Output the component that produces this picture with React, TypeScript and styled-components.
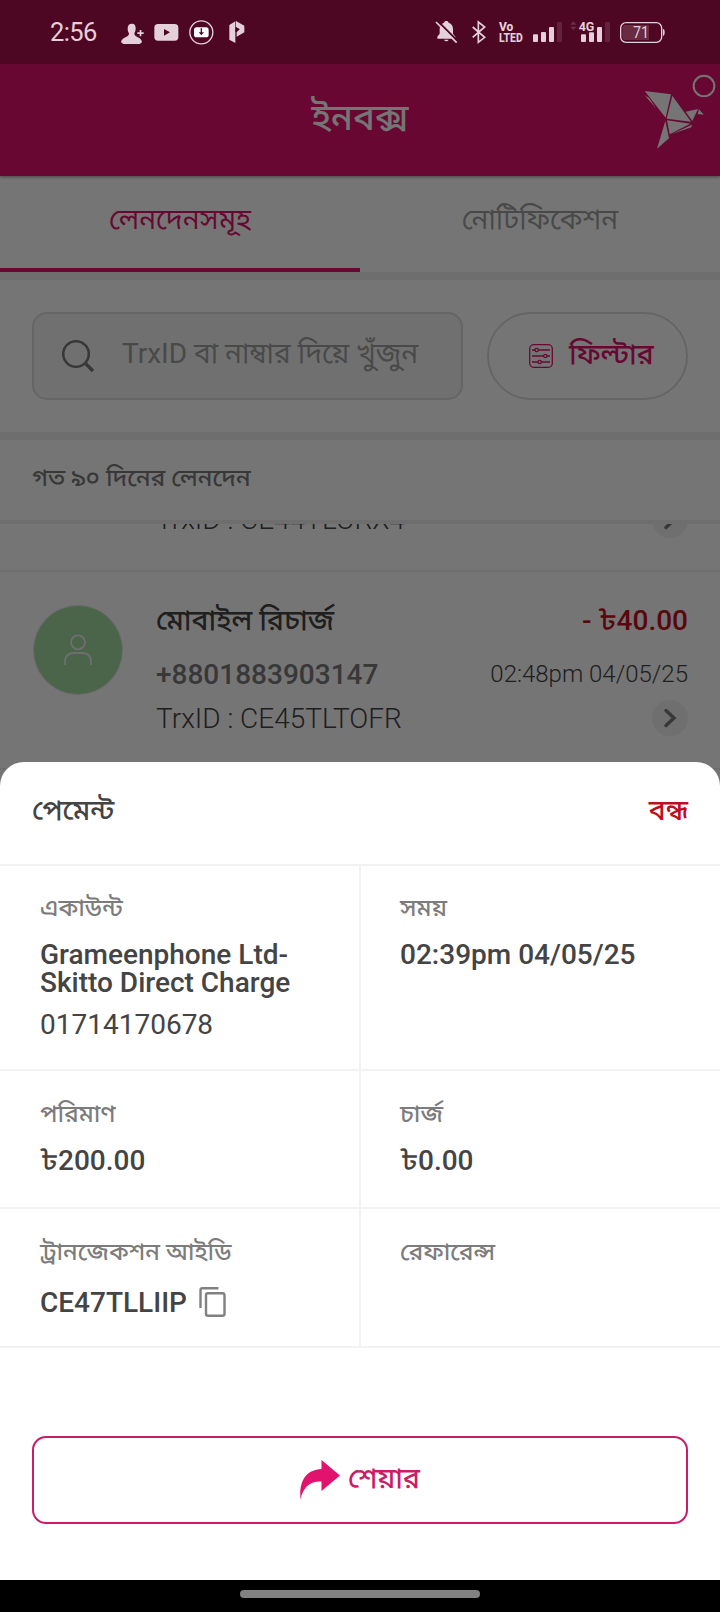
import React from 'react';
import styled, { createGlobalStyle } from 'styled-components';

const Global = createGlobalStyle`
  * { box-sizing: border-box; }
  body { margin: 0; background: #000; font-family: Roboto, "Noto Sans Bengali UI", sans-serif; }
`;

const Screen = styled.div`
  position: relative;
  width: 720px;
  height: 1612px;
  display: flex;
  flex-direction: column;
  overflow: hidden;
  background: #fff;
`;

const Text = styled.span<{ size?: number; weight?: number; color?: string; line?: number }>`
  display: block;
  font-size: ${p => p.size ?? 28}px;
  font-weight: ${p => p.weight ?? 400};
  line-height: ${p => p.line ?? 28}px;
  color: ${p => p.color ?? '#444'};
  white-space: nowrap;
`;

/* status bar */
const StatusBar = styled.div`
  position: relative;
  z-index: 2;
  height: 64px;
  flex: none;
  display: flex;
  justify-content: space-between;
  align-items: flex-start;
  padding: 20px 55px 0 50px;
  background: #4e0722;
  color: #e3d0d9;
`;
const StatusGroup = styled.div`
  display: flex;
  align-items: center;
  height: 25px;
`;
const Clock = styled.span`
  font-size: 25.5px;
  line-height: 25px;
  letter-spacing: -0.6px;
  width: 71px;
`;
const StatusIcon = styled.svg<{ gap?: number }>`
  display: block;
  height: 25px;
  margin-left: ${p => p.gap ?? 0}px;
  fill: currentColor;
  overflow: visible;
`;

/* inbox header */
const Header = styled.header`
  position: relative;
  z-index: 1;
  height: 112px;
  flex: none;
  display: grid;
  grid-template-columns: 1fr auto 1fr;
  align-items: center;
  background: #e2136e;
  box-shadow: 0 1px 3px rgba(0, 0, 0, 0.4);
`;
const HeaderTitle = styled.div`
  grid-column: 2;
  padding-bottom: 4px;
`;
const Bird = styled.svg`
  justify-self: end;
  display: block;
  width: 80px;
  height: 112px;
  fill: #fff;
`;

const Tabs = styled.nav`
  display: grid;
  grid-template-columns: 1fr 1fr;
  height: 104px;
  flex: none;
  border-bottom: 8px solid #f0f0f0;
`;
const Tab = styled.div<{ active?: boolean }>`
  display: flex;
  justify-content: center;
  align-items: center;
  padding-bottom: ${p => (p.active ? 4 : 8)}px;
  border-bottom: ${p => (p.active ? '4px solid #e2136e' : 'none')};
`;

const SearchPanel = styled.div`
  display: flex;
  gap: 24px;
  padding: 32px;
  height: 160px;
  flex: none;
  border-bottom: 8px solid #f0f0f0;
`;
const SearchBox = styled.div`
  width: 431px;
  height: 88px;
  border: 2px solid #dcdcdc;
  border-radius: 15px;
  background: #f5f5f5;
  display: flex;
  align-items: center;
  padding: 0 0 4px 28px;
`;
const SearchIcon = styled.svg`
  width: 32px;
  height: 32px;
  margin: 4px 28px 0 0;
  fill: none;
  stroke: #7a7a7a;
  stroke-width: 2.6;
`;
const FilterButton = styled.div`
  width: 201px;
  height: 88px;
  border: 2px solid #dcdcdc;
  border-radius: 44px;
  display: flex;
  align-items: center;
  padding-left: 40px;
`;
const FilterIcon = styled.svg`
  width: 24px;
  height: 24px;
  margin-right: 16px;
  fill: none;
  stroke: #e2136e;
  stroke-width: 1.3;
`;
const FilterLabel = styled.div`
  padding-bottom: 3px;
`;

const SectionTitle = styled.div`
  height: 84px;
  flex: none;
  border-bottom: 4px solid #f0f0f0;
  padding: 24px 32px 0;
`;

/* transaction list */
const List = styled.div`
  height: 1056px;
  flex: none;
  overflow: hidden;
`;
const Transaction = styled.article<{ clipped?: boolean }>`
  height: 198px;
  margin-top: ${p => (p.clipped ? -150 : 0)}px;
  border-bottom: 2px solid #eee;
  display: grid;
  grid-template-columns: 122px 1fr auto;
  padding: 34px 32px 0 34px;
`;
const Avatar = styled.div`
  width: 88px;
  height: 88px;
  border-radius: 50%;
  background: #a4dda4;
  box-shadow: 0 0 0 1px #e6e6e6;
  display: flex;
  align-items: center;
  justify-content: center;
`;
const AvatarIcon = styled.svg`
  width: 30px;
  height: 32px;
  fill: none;
  stroke: #f0f0f0;
  stroke-width: 1.8;
`;
const Lines = styled.div<{ end?: boolean }>`
  display: flex;
  flex-direction: column;
  align-items: ${p => (p.end ? 'flex-end' : 'flex-start')};
  padding-top: 1px;
`;
const Line = styled.div<{ h: number }>`
  height: ${p => p.h}px;
`;
const Chevron = styled.svg`
  width: 36px;
  height: 36px;
  fill: none;
  stroke: #7a7a7a;
  stroke-width: 3.4;
  border-radius: 50%;
  background: #f2f2f2;
`;

const Scrim = styled.div`
  position: absolute;
  inset: 64px 0 0;
  z-index: 1;
  background: rgba(0, 0, 0, 0.54);
`;

/* payment details sheet */
const Sheet = styled.section`
  position: absolute;
  z-index: 2;
  left: 0;
  right: 0;
  bottom: 32px;
  height: 818px;
  border-radius: 24px 24px 0 0;
  background: #fff;
`;
const SheetHeader = styled.div`
  display: flex;
  justify-content: space-between;
  height: 104px;
  padding: 35px 32px 0;
  border-bottom: 2px solid #f2f2f2;
`;
const DetailRow = styled.div<{ h: number }>`
  display: grid;
  grid-template-columns: 361px 1fr;
  height: ${p => p.h}px;
  border-bottom: 2px solid #f2f2f2;
`;
const Cell = styled.div<{ top?: number }>`
  padding: ${p => p.top ?? 29}px 0 0 39px;
  &:first-child {
    padding-left: 40px;
    border-right: 2px solid #f2f2f2;
  }
`;
const Value = styled.div<{ gap?: number }>`
  margin-top: ${p => p.gap ?? 19}px;
  display: flex;
  align-items: center;
`;
const TrxId = styled.div`
  padding-top: 2px;
`;
const CopyIcon = styled.svg`
  width: 27px;
  height: 32px;
  margin-left: 12px;
  fill: none;
  stroke: #808080;
  stroke-width: 2.4;
`;
const ShareButton = styled.div`
  margin: 88px 32px 0;
  height: 88px;
  border: 2px solid #cc1c68;
  border-radius: 14px;
  display: flex;
  justify-content: center;
  align-items: center;
`;
const ShareIcon = styled.svg`
  width: 40px;
  height: 40px;
  margin-right: 8px;
  fill: #e2136e;
`;
const ShareLabel = styled.div`
  padding-bottom: 2px;
`;

const NavBar = styled.div`
  position: relative;
  z-index: 2;
  height: 32px;
  flex: none;
  background: #000;
  display: flex;
  justify-content: center;
  padding-top: 10px;
`;
const NavPill = styled.div`
  width: 240px;
  height: 8px;
  border-radius: 4px;
  background: #828282;
`;

const ChevronIcon = () => (
  <Chevron viewBox="0 0 36 36"><path d="M14 10.5l8 7.5-8 7.5" strokeLinecap="round" /></Chevron>
);

const Label = ({ children }: { children: React.ReactNode }) => (
  <Text size={24} weight={500} color="#7c7c7c">{children}</Text>
);

function Status() {
  return (
    <StatusBar>
      <StatusGroup>
        <Clock>2:56</Clock>
        <StatusIcon viewBox="366 60 68 75" width="22.7">
          <path d="M399 71c8 0 11 6 11 14 0 7-2 11-4 15 0 6 3 8 9 11 9 4 13 8 14 16l-7 5h-49l-7-5c1-8 6-12 15-16 6-3 9-5 9-11-3-4-4-8-4-15 0-8 4-14 13-14z" />
          <path d="M422 90h5v7h7v5h-7v7h-5v-7h-7v-5h7z" />
        </StatusIcon>
        <StatusIcon viewBox="465 60 75 75" width="25" gap={10.3}>
          <path fillRule="evenodd" d="M477 72h50q11 0 11 11v28q0 11-11 11h-50q-11 0-11-11v-28q0-11 11-11zM495 87v20l18-10z" />
        </StatusIcon>
        <StatusIcon viewBox="570 60 75 75" width="25" gap={10}>
          <circle cx="607" cy="97" r="34.5" fill="none" stroke="currentColor" strokeWidth="4" />
          <rect x="585" y="82" width="44" height="30" rx="8" fill="#fff" />
          <path d="M605 85h4v12h6l-8 9-8-9h6z" fill="#4e0722" />
        </StatusIcon>
        <StatusIcon viewBox="689 60 48 75" width="16" gap={14.7}>
          <path d="M690 75l18-11v65l-18-10zM710 63l25 14v20l-23 13V97l9-9-11-7z" />
          <path d="M708 81l13 7-13 8z" fill="#4e0722" />
        </StatusIcon>
      </StatusGroup>
      <StatusGroup>
        <StatusIcon viewBox="228 60 63 75" width="21">
          <path d="M259 63c4 0 6 2 7 5 9 3 13 10 13 20v13l7 9v6h-54v-6l7-9V88c0-10 4-17 13-20 1-3 3-5 7-5zM252 119h14q-2 5-7 5t-7-5z" />
          <path d="M232 62l62 62" stroke="#4e0722" strokeWidth="6" />
          <path d="M228 66l62 62" stroke="currentColor" strokeWidth="5" />
        </StatusIcon>
        <StatusIcon viewBox="335 60 42 75" width="14" gap={15}>
          <path d="M337 81l36 31-19 15V66l19 15-36 31" fill="none" stroke="currentColor" strokeWidth="5" />
        </StatusIcon>
        <StatusIcon viewBox="417 60 70 75" width="23.3" gap={13.5}>
          <text x="417" y="93" fontFamily="Roboto" fontWeight="800" fontSize="37" textLength="43" lengthAdjust="spacingAndGlyphs">Vo</text>
          <text x="417" y="125" fontFamily="Roboto" fontWeight="800" fontSize="39" textLength="71" lengthAdjust="spacingAndGlyphs">LTED</text>
        </StatusIcon>
        <StatusIcon viewBox="519 60 87 75" width="29" gap={10.7}>
          <rect x="519" y="103" width="15" height="23" rx="3" />
          <rect x="543" y="96" width="15" height="30" rx="3" />
          <rect x="567" y="81" width="15" height="45" rx="3" />
          <rect x="591" y="66" width="15" height="60" rx="3" opacity=".14" />
        </StatusIcon>
        <StatusIcon viewBox="630 60 120 75" width="40" gap={8}>
          <path d="M630 74l10-10 10 10zM630 80l10 10 10-10z" opacity=".2" />
          <text x="656" y="94" fontFamily="Roboto" fontWeight="700" fontSize="41" textLength="47" lengthAdjust="spacingAndGlyphs">4G</text>
          <rect x="663" y="103" width="15" height="23" rx="3" />
          <rect x="687" y="97" width="15" height="29" rx="3" />
          <rect x="711" y="81" width="15" height="45" rx="3" />
          <rect x="735" y="66" width="15" height="60" rx="3" opacity=".14" />
        </StatusIcon>
        <StatusIcon viewBox="780 60 135 75" width="45" gap={10}>
          <rect x="782" y="68" width="123" height="59" rx="16" fill="none" stroke="currentColor" strokeWidth="4" />
          <path d="M797 75h70v45h-70q-10 0-10-10V85q0-10 10-10z" opacity=".18" />
          <path d="M909 87q5 0 5 10t-5 11z" />
          <text x="819" y="114" fontFamily="Roboto" fontSize="49" textLength="48" lengthAdjust="spacingAndGlyphs">71</text>
        </StatusIcon>
      </StatusGroup>
    </StatusBar>
  );
}

export default function App() {
  return (
    <Screen>
      <Global />
      <Status />
      <Header>
        <HeaderTitle><Text size={36} weight={500} line={40} color="#fff">ইনবক্স</Text></HeaderTitle>
        <Bird viewBox="840 192 240 336">
          <path d="M854 273l79 10-16 70zM854 286l14 9 20 30zM937 287l56 78-73-9zM977 335l37-8-17 36zM1017 328l14 16-18-2zM921 361l70 10-62 32zM916 363l11 52-36 31zM996 374l-2 8-58 20z" />
          <circle cx="1032" cy="258" r="31" fill="none" stroke="#fff" strokeWidth="6" />
        </Bird>
      </Header>
      <Tabs>
        <Tab active><Text color="#e2136e">লেনদেনসমূহ</Text></Tab>
        <Tab><Text color="#a0a0a0">নোটিফিকেশন</Text></Tab>
      </Tabs>
      <SearchPanel>
        <SearchBox>
          <SearchIcon viewBox="0 0 32 32"><circle cx="14" cy="14" r="12.8" /><path d="M23.5 23.5l7.5 7.5" strokeWidth="3.4" /></SearchIcon>
          <Text color="#a0a0a0">TrxID বা নাম্বার দিয়ে খুঁজুন</Text>
        </SearchBox>
        <FilterButton>
          <FilterIcon viewBox="0 0 24 24">
            <rect x=".7" y=".7" width="22.6" height="22.6" rx="4" />
            <path d="M3 6h3M9.500 6H21M3 12h11.500M18 12h3M3 18h6M12.500 18H21" />
            <circle cx="7.700" cy="6" r="1.700" /><circle cx="16.300" cy="12" r="1.700" /><circle cx="10.700" cy="18" r="1.700" />
          </FilterIcon>
          <FilterLabel><Text weight={500} color="#e2136e">ফিল্টার</Text></FilterLabel>
        </FilterButton>
      </SearchPanel>
      <SectionTitle><Text size={24} weight={500} color="#7a7a7a">গত ৯০ দিনের লেনদেন</Text></SectionTitle>
      <List>
        <Transaction clipped>
          <Avatar />
          <Lines>
            <Line h={97} />
            <Text weight={300}>TrxID : CE44TLURX4</Text>
          </Lines>
          <Lines end>
            <Line h={93} />
            <ChevronIcon />
          </Lines>
        </Transaction>
        <Transaction>
          <Avatar>
            <AvatarIcon viewBox="0 0 30 32"><circle cx="15" cy="8.300" r="7" /><path d="M2 31v-3q0-9 9-9h8q9 0 9 9v3" /></AvatarIcon>
          </Avatar>
          <Lines>
            <Line h={54}><Text weight={500}>মোবাইল রিচার্জ</Text></Line>
            <Line h={44}><Text weight={500} color="#7a7a7a">+8801883903147</Text></Line>
            <Text weight={300}>TrxID : CE45TLTOFR</Text>
          </Lines>
          <Lines end>
            <Line h={53}><Text weight={500} color="#c30f20">- ৳40.00</Text></Line>
            <Line h={40}><Text size={24} weight={300}>02:48pm 04/05/25</Text></Line>
            <ChevronIcon />
          </Lines>
        </Transaction>
      </List>
      <NavBar><NavPill /></NavBar>
      <Scrim />
      <Sheet>
        <SheetHeader>
          <Text weight={500}>পেমেন্ট</Text>
          <Text weight={500} color="#bf0d20">বন্ধ</Text>
        </SheetHeader>
        <DetailRow h={205}>
          <Cell top={28}>
            <Label>একাউন্ট</Label>
            <Value><Text weight={500}>Grameenphone Ltd-<br />Skitto Direct Charge</Text></Value>
            <Value gap={14}><Text>01714170678</Text></Value>
          </Cell>
          <Cell top={28}>
            <Label>সময়</Label>
            <Value><Text weight={500}>02:39pm 04/05/25</Text></Value>
          </Cell>
        </DetailRow>
        <DetailRow h={138}>
          <Cell>
            <Label>পরিমাণ</Label>
            <Value><Text weight={500}>৳200.00</Text></Value>
          </Cell>
          <Cell>
            <Label>চার্জ</Label>
            <Value><Text weight={500}>৳0.00</Text></Value>
          </Cell>
        </DetailRow>
        <DetailRow h={139}>
          <Cell>
            <Label>ট্রানজেকশন আইডি</Label>
            <Value gap={20}>
              <TrxId><Text weight={500}>CE47TLLIIP</Text></TrxId>
              <CopyIcon viewBox="0 0 27 32">
                <path d="M1.500 22V4q0-1.800 1.800-1.800H19.500" />
                <rect x="7" y="7.200" width="18.500" height="22.500" rx="2" />
              </CopyIcon>
            </Value>
          </Cell>
          <Cell>
            <Label>রেফারেন্স</Label>
          </Cell>
        </DetailRow>
        <ShareButton>
          <ShareIcon viewBox="0 0 40 40"><path d="M21.500 0L40 15.500 21.500 31V21.500C9 21 3 28 .5 39.500-1 22 5 10 21.500 9z" /></ShareIcon>
          <ShareLabel><Text weight={500} color="#cc1c68">শেয়ার</Text></ShareLabel>
        </ShareButton>
      </Sheet>
    </Screen>
  );
}
